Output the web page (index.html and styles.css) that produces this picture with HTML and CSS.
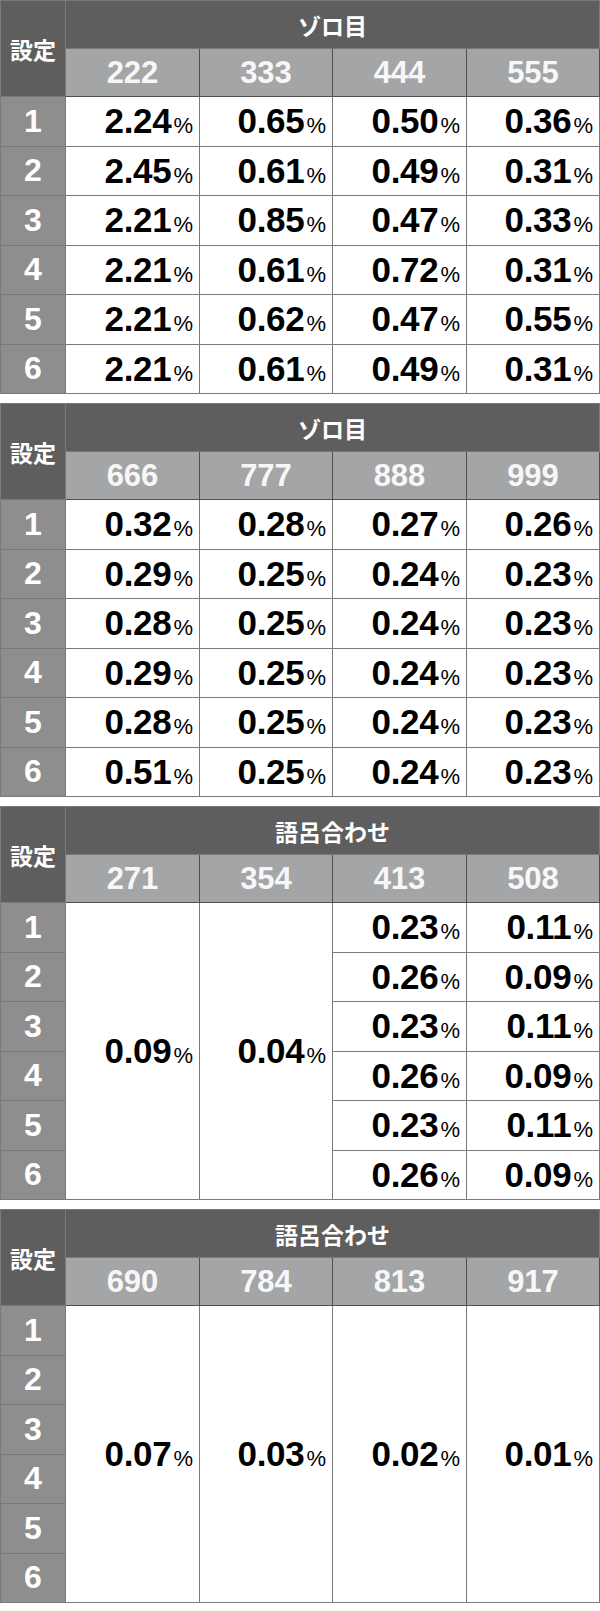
FILE: index.html
```html
<!DOCTYPE html>
<html lang="ja">
<head>
<meta charset="utf-8">
<link rel="stylesheet" href="styles.css">
</head>
<body>
<div class="page">

<table class="rt">
<colgroup><col class="c0"><col class="c1"><col class="c2"><col class="c3"><col class="c4"></colgroup>
<thead>
<tr class="h1"><th class="setei" rowspan="2">設定</th><th class="title" colspan="4">ゾロ目</th></tr>
<tr class="h2"><th>222</th><th>333</th><th>444</th><th>555</th></tr>
</thead>
<tbody>
<tr><th class="n">1</th><td>2.24<span class="p">%</span></td><td>0.65<span class="p">%</span></td><td>0.50<span class="p">%</span></td><td>0.36<span class="p">%</span></td></tr>
<tr><th class="n">2</th><td>2.45<span class="p">%</span></td><td>0.61<span class="p">%</span></td><td>0.49<span class="p">%</span></td><td>0.31<span class="p">%</span></td></tr>
<tr><th class="n">3</th><td>2.21<span class="p">%</span></td><td>0.85<span class="p">%</span></td><td>0.47<span class="p">%</span></td><td>0.33<span class="p">%</span></td></tr>
<tr><th class="n">4</th><td>2.21<span class="p">%</span></td><td>0.61<span class="p">%</span></td><td>0.72<span class="p">%</span></td><td>0.31<span class="p">%</span></td></tr>
<tr><th class="n">5</th><td>2.21<span class="p">%</span></td><td>0.62<span class="p">%</span></td><td>0.47<span class="p">%</span></td><td>0.55<span class="p">%</span></td></tr>
<tr><th class="n">6</th><td>2.21<span class="p">%</span></td><td>0.61<span class="p">%</span></td><td>0.49<span class="p">%</span></td><td>0.31<span class="p">%</span></td></tr>
</tbody>
</table>

<table class="rt">
<colgroup><col class="c0"><col class="c1"><col class="c2"><col class="c3"><col class="c4"></colgroup>
<thead>
<tr class="h1"><th class="setei" rowspan="2">設定</th><th class="title" colspan="4">ゾロ目</th></tr>
<tr class="h2"><th>666</th><th>777</th><th>888</th><th>999</th></tr>
</thead>
<tbody>
<tr><th class="n">1</th><td>0.32<span class="p">%</span></td><td>0.28<span class="p">%</span></td><td>0.27<span class="p">%</span></td><td>0.26<span class="p">%</span></td></tr>
<tr><th class="n">2</th><td>0.29<span class="p">%</span></td><td>0.25<span class="p">%</span></td><td>0.24<span class="p">%</span></td><td>0.23<span class="p">%</span></td></tr>
<tr><th class="n">3</th><td>0.28<span class="p">%</span></td><td>0.25<span class="p">%</span></td><td>0.24<span class="p">%</span></td><td>0.23<span class="p">%</span></td></tr>
<tr><th class="n">4</th><td>0.29<span class="p">%</span></td><td>0.25<span class="p">%</span></td><td>0.24<span class="p">%</span></td><td>0.23<span class="p">%</span></td></tr>
<tr><th class="n">5</th><td>0.28<span class="p">%</span></td><td>0.25<span class="p">%</span></td><td>0.24<span class="p">%</span></td><td>0.23<span class="p">%</span></td></tr>
<tr><th class="n">6</th><td>0.51<span class="p">%</span></td><td>0.25<span class="p">%</span></td><td>0.24<span class="p">%</span></td><td>0.23<span class="p">%</span></td></tr>
</tbody>
</table>

<table class="rt">
<colgroup><col class="c0"><col class="c1"><col class="c2"><col class="c3"><col class="c4"></colgroup>
<thead>
<tr class="h1"><th class="setei" rowspan="2">設定</th><th class="title" colspan="4">語呂合わせ</th></tr>
<tr class="h2"><th>271</th><th>354</th><th>413</th><th>508</th></tr>
</thead>
<tbody>
<tr><th class="n">1</th><td rowspan="6">0.09<span class="p">%</span></td><td rowspan="6">0.04<span class="p">%</span></td><td>0.23<span class="p">%</span></td><td>0.11<span class="p">%</span></td></tr>
<tr><th class="n">2</th><td>0.26<span class="p">%</span></td><td>0.09<span class="p">%</span></td></tr>
<tr><th class="n">3</th><td>0.23<span class="p">%</span></td><td>0.11<span class="p">%</span></td></tr>
<tr><th class="n">4</th><td>0.26<span class="p">%</span></td><td>0.09<span class="p">%</span></td></tr>
<tr><th class="n">5</th><td>0.23<span class="p">%</span></td><td>0.11<span class="p">%</span></td></tr>
<tr><th class="n">6</th><td>0.26<span class="p">%</span></td><td>0.09<span class="p">%</span></td></tr>
</tbody>
</table>

<table class="rt">
<colgroup><col class="c0"><col class="c1"><col class="c2"><col class="c3"><col class="c4"></colgroup>
<thead>
<tr class="h1"><th class="setei" rowspan="2">設定</th><th class="title" colspan="4">語呂合わせ</th></tr>
<tr class="h2"><th>690</th><th>784</th><th>813</th><th>917</th></tr>
</thead>
<tbody>
<tr><th class="n">1</th><td rowspan="6">0.07<span class="p">%</span></td><td rowspan="6">0.03<span class="p">%</span></td><td rowspan="6">0.02<span class="p">%</span></td><td rowspan="6">0.01<span class="p">%</span></td></tr>
<tr><th class="n">2</th></tr>
<tr><th class="n">3</th></tr>
<tr><th class="n">4</th></tr>
<tr><th class="n">5</th></tr>
<tr><th class="n">6</th></tr>
</tbody>
</table>

</div>
</body>
</html>
```

FILE: styles.css
```css
html, body {
  margin: 0;
  padding: 0;
  background: #ffffff;
}

.page {
  width: 600px;
  display: flex;
  flex-direction: column;
  gap: 9px;
}

.rt {
  width: 599px;
  border-collapse: collapse;
  table-layout: fixed;
  font-family: "Liberation Sans", "Noto Sans CJK JP", sans-serif;
}

.c0 { width: 65px; }
.c1 { width: 134px; }
.c2 { width: 133px; }
.c3 { width: 134px; }
.c4 { width: 133px; }

.rt th,
.rt td {
  padding: 0;
  border: 1px solid #7a7a7a;
}

.h1 th { height: 47px; }
.h2 th { height: 47px; }

.setei {
  background: #5e5e5e;
  color: #ffffff;
  font-family: "Noto Sans CJK JP", sans-serif;
  font-weight: 700;
  font-size: 23px;
  border-color: #4a4a4a;
}

.title {
  background: #5e5e5e;
  color: #ffffff;
  font-family: "Noto Sans CJK JP", sans-serif;
  font-weight: 700;
  font-size: 23px;
  border-color: #4a4a4a;
}

.h2 th {
  background: #a3a5a7;
  color: #f7f7f7;
  font-weight: 700;
  font-size: 31px;
  border-color: #4f4f4f;
}

.n {
  background: #8e8e8e;
  color: #ffffff;
  font-weight: 700;
  font-size: 32px;
  height: 48.5px;
  border-color: #4a4a4a;
}

.rt td {
  background: #ffffff;
  color: #000000;
  font-weight: 700;
  font-size: 35px;
  letter-spacing: -0.3px;
  text-align: right;
  padding-right: 6px;
  vertical-align: middle;
  white-space: nowrap;
}

.p {
  font-size: 22px;
  font-weight: 400;
  letter-spacing: 0;
  margin-left: 2px;
}
```
